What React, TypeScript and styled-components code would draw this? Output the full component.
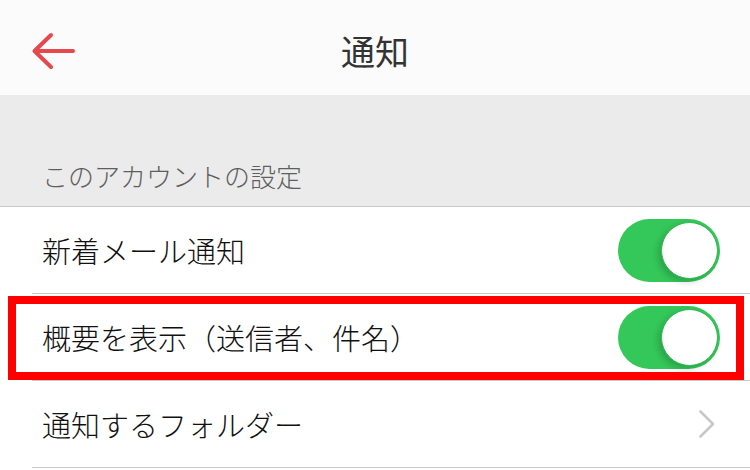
import React, { FC } from 'react';
import styled, { createGlobalStyle } from 'styled-components';

const GlobalStyle = createGlobalStyle`
    html, body {
        margin: 0;
        padding: 0;
        background: #ffffff;
    }

    body {
        font-family: "Noto Sans CJK JP", "Noto Sans", sans-serif;
        -webkit-font-smoothing: antialiased;
    }
`;

const Page = styled.div`
    width: 750px;
    display: flex;
    flex-direction: column;
    background: #ffffff;
`;

const Header = styled.header`
    height: 95px;
    box-sizing: border-box;
    padding-top: 7px;
    display: grid;
    grid-template-columns: 1fr auto 1fr;
    align-items: center;
    background: #fbfbfb;
`;

const BackButton = styled.button`
    justify-self: start;
    margin-left: 30px;
    padding: 0;
    border: none;
    background: none;
    display: flex;
    cursor: pointer;
`;

const Title = styled.h1`
    margin: 0;
    font-size: 34px;
    font-weight: 400;
    line-height: 1;
    color: #333333;
`;

const SectionHeader = styled.div`
    height: 112px;
    box-sizing: border-box;
    display: flex;
    align-items: flex-end;
    padding: 0 0 17px 42px;
    background: #ebebeb;
    border-bottom: 1px solid #c8c8c8;
`;

const SectionLabel = styled.span`
    font-size: 26px;
    font-weight: 300;
    line-height: 1;
    color: #5e5e5e;
`;

const List = styled.ul`
    margin: 0;
    padding: 0;
    list-style: none;
`;

const Row = styled.li`
    position: relative;
    height: 87px;
    display: flex;
    padding-left: 32px;
    background: #ffffff;
`;

const RowInner = styled.div`
    flex: 1;
    display: flex;
    align-items: center;
    justify-content: space-between;
    padding: 0 30px 0 10px;
    border-bottom: 1px solid #c8c8c8;
`;

const RowLabel = styled.span`
    font-size: 29px;
    font-weight: 300;
    line-height: 1;
    color: #111111;
`;

const Highlight = styled.div`
    position: absolute;
    top: 2px;
    left: 8px;
    right: 6px;
    bottom: 1px;
    border: 8px solid #ff0000;
    pointer-events: none;
`;

const Toggle = styled.div<{ $on: boolean }>`
    width: 102px;
    height: 63px;
    box-sizing: border-box;
    padding: 0 2px;
    border-radius: 32px;
    display: flex;
    align-items: center;
    justify-content: ${({ $on }) => ($on ? 'flex-end' : 'flex-start')};
    background: ${({ $on }) => ($on ? '#34c759' : '#e5e5ea')};
`;

const Knob = styled.div`
    width: 57px;
    height: 57px;
    box-sizing: border-box;
    border-radius: 50%;
    background: #ffffff;
    border: 1px solid #2fb752;
    box-shadow: -3px 3px 6px rgba(0, 0, 0, 0.18);
`;

const Chevron = styled.svg`
    margin-right: 4px;
`;

const BackArrow: FC = () => (
    <svg width="48" height="40" viewBox="0 0 48 40">
        <path
            d="M43 20H5M21 4L4.5 20L21 36"
            fill="none"
            stroke="#e5484d"
            strokeWidth="4"
            strokeLinecap="round"
            strokeLinejoin="round"
        />
    </svg>
);

const Switch: FC<{ on: boolean }> = ({ on }) => (
    <Toggle $on={on}>
        <Knob />
    </Toggle>
);

const App: FC = () => (
    <Page>
        <GlobalStyle />
        <Header>
            <BackButton aria-label="戻る">
                <BackArrow />
            </BackButton>
            <Title>通知</Title>
        </Header>
        <SectionHeader>
            <SectionLabel>このアカウントの設定</SectionLabel>
        </SectionHeader>
        <List>
            <Row>
                <RowInner>
                    <RowLabel>新着メール通知</RowLabel>
                    <Switch on />
                </RowInner>
            </Row>
            <Row>
                <RowInner>
                    <RowLabel>概要を表示（送信者、件名）</RowLabel>
                    <Switch on />
                </RowInner>
                <Highlight />
            </Row>
            <Row>
                <RowInner>
                    <RowLabel>通知するフォルダー</RowLabel>
                    <Chevron width="18" height="30" viewBox="0 0 18 30">
                        <path
                            d="M2.5 2.5L15 15L2.5 27.5"
                            fill="none"
                            stroke="#c7c7cc"
                            strokeWidth="2.6"
                            strokeLinecap="round"
                            strokeLinejoin="round"
                        />
                    </Chevron>
                </RowInner>
            </Row>
        </List>
    </Page>
);

export default App;
